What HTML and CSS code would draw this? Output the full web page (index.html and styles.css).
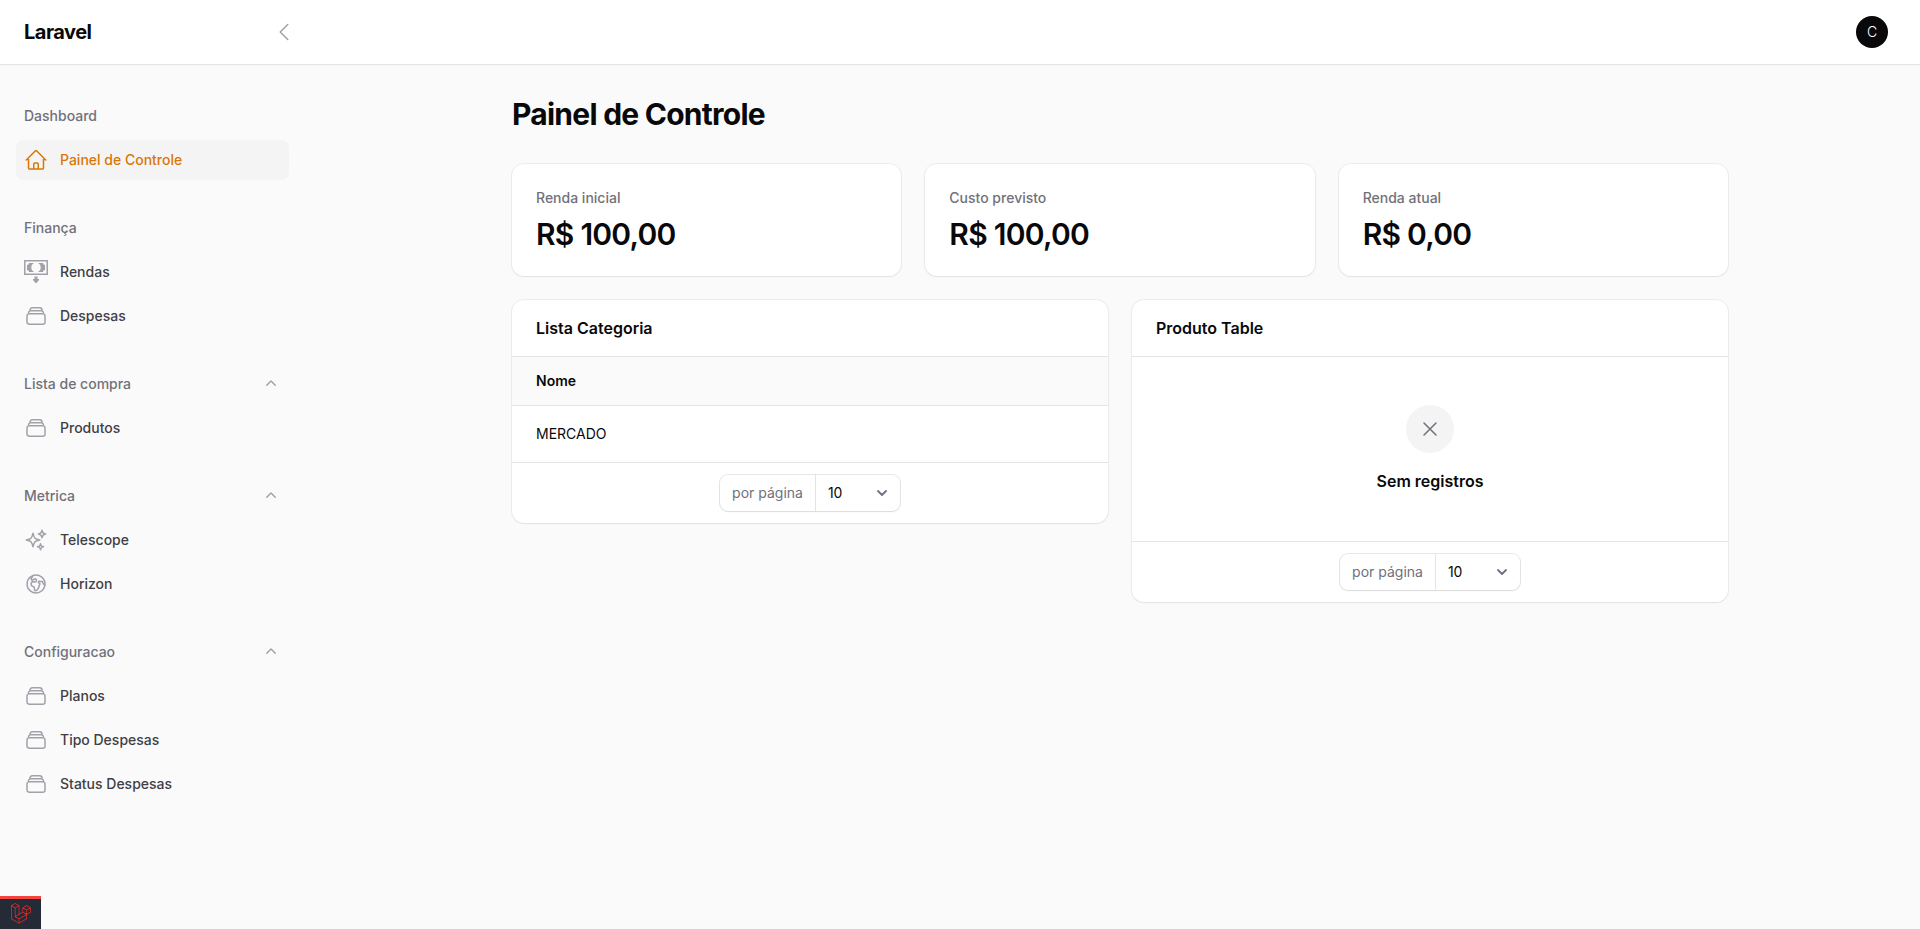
FILE: index.html
```html
<!DOCTYPE html>
<html lang="pt-BR">
<head>
<meta charset="utf-8">
<title>Painel de Controle - Laravel</title>
<link rel="stylesheet" href="styles.css">
</head>
<body>
<svg class="sprite" aria-hidden="true">
  <symbol id="home" viewBox="0 0 24 24"><path d="m2.25 12 8.954-8.955c.44-.439 1.152-.439 1.591 0L21.75 12M4.5 9.75v10.125c0 .621.504 1.125 1.125 1.125H9.75v-4.875c0-.621.504-1.125 1.125-1.125h2.25c.621 0 1.125.504 1.125 1.125V21h4.125c.621 0 1.125-.504 1.125-1.125V9.75M8.25 21h8.25"/></symbol>
  <symbol id="stack" viewBox="0 0 24 24"><path d="M6 6.878V6a2.25 2.25 0 0 1 2.25-2.25h7.5A2.25 2.25 0 0 1 18 6v.878m-12 0c.235-.083.487-.128.75-.128h10.5c.263 0 .515.045.75.128m-12 0A2.25 2.25 0 0 0 4.5 9v.878m13.5-3A2.25 2.25 0 0 1 19.5 9v.878m0 0a2.246 2.246 0 0 0-.75-.128H5.25c-.263 0-.515.045-.75.128m15 0A2.25 2.25 0 0 1 21 12v6a2.25 2.25 0 0 1-2.25 2.25H5.25A2.25 2.25 0 0 1 3 18v-6c0-.98.626-1.813 1.5-2.122"/></symbol>
  <symbol id="cash" viewBox="0 0 24 24"><path fill="currentColor" stroke="none" fill-rule="evenodd" d="M0 0h24v15H0zM1.500 1.500v12h21v-12zM5 3h5a5 5 0 0 0 0 9H5a2 2 0 0 0-2-2V5a2 2 0 0 0 2-2zM14 3h5a2 2 0 0 0 2 2v5a2 2 0 0 0-2 2h-5a5 5 0 0 0 0-9zM10.500 16.500h3V19H15v1l-3 3.500L9 20v-1h1.500z"/></symbol>
  <symbol id="sparkles" viewBox="0 0 24 24"><path d="M9.813 15.904 9 18.75l-.813-2.846a4.5 4.5 0 0 0-3.09-3.09L2.25 12l2.846-.813a4.5 4.5 0 0 0 3.09-3.09L9 5.25l.813 2.846a4.5 4.5 0 0 0 3.09 3.09L15.75 12l-2.846.813a4.5 4.5 0 0 0-3.09 3.09ZM18.259 8.715 18 9.75l-.259-1.035a3.375 3.375 0 0 0-2.455-2.456L14.25 6l1.036-.259a3.375 3.375 0 0 0 2.455-2.456L18 2.25l.259 1.035a3.375 3.375 0 0 0 2.456 2.456L21.75 6l-1.035.259a3.375 3.375 0 0 0-2.456 2.456ZM16.894 20.567 16.5 21.75l-.394-1.183a2.25 2.25 0 0 0-1.423-1.423L13.5 18.75l1.183-.394a2.25 2.25 0 0 0 1.423-1.423l.394-1.183.394 1.183a2.25 2.25 0 0 0 1.423 1.423l1.183.394-1.183.394a2.25 2.25 0 0 0-1.423 1.423Z"/></symbol>
  <symbol id="globe" viewBox="0 0 24 24"><path d="m20.893 13.393-1.135-1.135a2.252 2.252 0 0 1-.421-.585l-1.08-2.16a.414.414 0 0 0-.663-.107.827.827 0 0 1-.812.21l-1.273-.363a.89.89 0 0 0-.738 1.595l.587.39c.59.395.674 1.23.172 1.732l-.2.2c-.212.212-.33.498-.33.796v.41c0 .409-.11.809-.32 1.158l-1.315 2.191a2.11 2.11 0 0 1-1.81 1.025 1.055 1.055 0 0 1-1.055-1.055v-1.172c0-.92-.56-1.747-1.414-2.089l-.655-.261a2.25 2.25 0 0 1-1.383-2.46l.007-.042a2.25 2.25 0 0 1 .29-.787l.09-.15a2.25 2.25 0 0 1 2.37-1.048l1.178.236a1.125 1.125 0 0 0 1.302-.795l.208-.73a1.125 1.125 0 0 0-.578-1.315l-.665-.332-.091.091a2.25 2.25 0 0 1-1.591.659h-.18c-.249 0-.487.1-.662.274a.931.931 0 0 1-1.458-1.137l1.411-2.353a2.25 2.25 0 0 0 .286-.76m11.928 9.869A9 9 0 0 0 8.965 3.525m11.928 9.868A9 9 0 1 1 8.965 3.525"/></symbol>
  <symbol id="left" viewBox="0 0 24 24"><path d="M15.75 19.5 8.25 12l7.5-7.5"/></symbol>
  <symbol id="close" viewBox="0 0 24 24"><path d="M6 18 18 6M6 6l12 12"/></symbol>
  <symbol id="up" viewBox="0 0 20 20"><path fill="currentColor" stroke="none" fill-rule="evenodd" d="M9.470 6.470a.75.75 0 0 1 1.060 0l4.250 4.250a.75.75 0 1 1-1.060 1.060L10 8.060l-3.720 3.720a.75.75 0 0 1-1.060-1.060l4.250-4.250Z"/></symbol>
  <symbol id="down" viewBox="0 0 20 20"><path stroke-width="1.800" d="m6 8 4 4 4-4"/></symbol>
</svg>

<header class="topbar">
  <div class="brand">
    <a class="brand-name" href="#">Laravel</a>
    <button class="icon-button" type="button" aria-label="Recolher menu"><svg class="icon"><use href="#left"/></svg></button>
  </div>
  <button class="avatar" type="button" aria-label="Conta">C</button>
</header>

<div class="layout">
  <nav class="sidebar">
    <section class="group">
      <div class="group-head"><span>Dashboard</span></div>
      <a class="item active" href="#"><svg class="icon"><use href="#home"/></svg>Painel de Controle</a>
    </section>
    <section class="group">
      <div class="group-head"><span>Finança</span></div>
      <a class="item" href="#"><svg class="icon"><use href="#cash"/></svg>Rendas</a>
      <a class="item" href="#"><svg class="icon"><use href="#stack"/></svg>Despesas</a>
    </section>
    <section class="group">
      <button class="group-head" type="button"><span>Lista de compra</span><svg class="icon small"><use href="#up"/></svg></button>
      <a class="item" href="#"><svg class="icon"><use href="#stack"/></svg>Produtos</a>
    </section>
    <section class="group">
      <button class="group-head" type="button"><span>Metrica</span><svg class="icon small"><use href="#up"/></svg></button>
      <a class="item" href="#"><svg class="icon"><use href="#sparkles"/></svg>Telescope</a>
      <a class="item" href="#"><svg class="icon"><use href="#globe"/></svg>Horizon</a>
    </section>
    <section class="group">
      <button class="group-head" type="button"><span>Configuracao</span><svg class="icon small"><use href="#up"/></svg></button>
      <a class="item" href="#"><svg class="icon"><use href="#stack"/></svg>Planos</a>
      <a class="item" href="#"><svg class="icon"><use href="#stack"/></svg>Tipo Despesas</a>
      <a class="item" href="#"><svg class="icon"><use href="#stack"/></svg>Status Despesas</a>
    </section>
  </nav>

  <main class="main">
    <h1 class="title">Painel de Controle</h1>
    <div class="widgets">
      <div class="stats">
        <section class="card stat"><span class="stat-label">Renda inicial</span><span class="stat-value">R$ 100,00</span></section>
        <section class="card stat"><span class="stat-label">Custo previsto</span><span class="stat-value">R$ 100,00</span></section>
        <section class="card stat"><span class="stat-label">Renda atual</span><span class="stat-value">R$ 0,00</span></section>
      </div>
      <div class="tables">
        <section class="card">
          <h2 class="card-title">Lista Categoria</h2>
          <table class="table">
            <thead><tr><th scope="col">Nome</th></tr></thead>
            <tbody><tr><td>MERCADO</td></tr></tbody>
          </table>
          <div class="pager">
            <div class="per-page">
              <label class="per-page-label" for="pp-categoria">por página</label>
              <div class="select-wrap">
                <select class="select" id="pp-categoria"><option>5</option><option selected>10</option><option>25</option><option>50</option><option>Todos</option></select>
                <svg class="icon select-arrow"><use href="#down"/></svg>
              </div>
            </div>
          </div>
        </section>
        <section class="card">
          <h2 class="card-title">Produto Table</h2>
          <div class="empty">
            <div class="empty-icon"><svg class="icon"><use href="#close"/></svg></div>
            <h3 class="empty-title">Sem registros</h3>
          </div>
          <div class="pager">
            <div class="per-page">
              <label class="per-page-label" for="pp-produto">por página</label>
              <div class="select-wrap">
                <select class="select" id="pp-produto"><option>5</option><option selected>10</option><option>25</option><option>50</option><option>Todos</option></select>
                <svg class="icon select-arrow"><use href="#down"/></svg>
              </div>
            </div>
          </div>
        </section>
      </div>
    </div>
  </main>
</div>

<button class="debugbar" type="button" aria-label="Abrir barra de depuração">
  <svg class="debugbar-logo" viewBox="0 0 50 52"><path d="M49.626 11.564a.809.809 0 0 1 .028.209v10.972a.8.8 0 0 1-.402.694l-9.209 5.302V39.25c0 .286-.152.55-.4.694L20.42 51.01c-.044.025-.092.041-.14.058-.018.006-.035.017-.054.022a.805.805 0 0 1-.41 0c-.022-.006-.042-.018-.063-.026-.044-.016-.09-.03-.132-.054L.402 39.944A.801.801 0 0 1 0 39.25V6.334c0-.072.01-.142.028-.21.006-.023.02-.044.028-.067.015-.042.029-.085.051-.124.015-.026.037-.047.055-.071.023-.032.044-.065.071-.093.023-.023.053-.04.079-.06.029-.024.055-.05.088-.069h.001l9.61-5.533a.802.802 0 0 1 .8 0l9.61 5.533h.002c.032.02.059.045.088.068.026.02.055.038.078.06.028.029.048.062.072.094.017.024.04.045.054.071.023.04.036.082.052.124.008.023.022.044.028.068a.809.809 0 0 1 .028.209v20.559l8.008-4.611v-10.51c0-.07.01-.141.028-.208.007-.024.02-.045.028-.068.016-.042.03-.085.052-.124.015-.026.037-.047.054-.071.024-.032.044-.065.072-.093.023-.023.052-.04.078-.06.03-.024.056-.05.088-.069h.001l9.611-5.533a.801.801 0 0 1 .8 0l9.61 5.533c.034.02.06.045.09.068.025.02.054.038.077.06.028.029.048.062.072.094.018.024.04.045.054.071.023.039.036.082.052.124.009.023.022.044.028.068zm-1.574 10.718v-9.124l-3.363 1.936-4.646 2.675v9.124l8.01-4.611zm-9.61 16.505v-9.13l-4.57 2.61-13.05 7.448v9.216l17.62-10.144zM1.602 7.719v31.068L19.22 48.93v-9.214l-9.204-5.209-.003-.002-.004-.002c-.031-.018-.057-.044-.086-.066-.025-.02-.054-.036-.076-.058l-.002-.003c-.026-.025-.044-.056-.066-.084-.02-.027-.044-.05-.06-.078l-.001-.003c-.018-.03-.029-.066-.042-.1-.013-.03-.03-.058-.038-.09v-.001c-.01-.038-.012-.078-.016-.117-.004-.03-.012-.06-.012-.09v-.002-21.481L4.965 9.654 1.602 7.72zm8.81-5.994L2.405 6.334l8.005 4.609 8.006-4.61-8.006-4.608zm4.164 28.764l4.645-2.674V7.719l-3.363 1.936-4.646 2.675v20.096l3.364-1.937zM39.243 7.164l-8.006 4.609 8.006 4.609 8.005-4.61-8.005-4.608zm-.801 10.605l-4.646-2.675-3.363-1.936v9.124l4.645 2.674 3.364 1.937v-9.124zM20.02 38.33l11.743-6.704 5.87-3.35-8-4.606-9.211 5.303-8.395 4.833 7.993 4.524z"/></svg>
</button>
</body>
</html>
```
FILE: styles.css
```css
*, *::before, *::after { box-sizing: border-box; }
body {
  margin: 0;
  min-height: 100vh;
  background: #fafafa;
  color: #09090b;
  font: 400 14px/20px Inter, "Liberation Sans", sans-serif;
}
h1, h2, h3 { margin: 0; }
a { color: inherit; text-decoration: none; }
button, select { font: inherit; color: inherit; background: none; border: 0; margin: 0; padding: 0; }
button { cursor: pointer; }

.sprite { position: absolute; width: 0; height: 0; }
.icon {
  flex: none;
  width: 24px;
  height: 24px;
  fill: none;
  stroke: currentColor;
  stroke-width: 1.5;
  stroke-linecap: round;
  stroke-linejoin: round;
  color: #a1a1aa;
}
.icon.small { width: 20px; height: 20px; }

.topbar {
  display: flex;
  align-items: center;
  justify-content: space-between;
  height: 64px;
  padding: 0 32px 0 24px;
  background: #fff;
  box-shadow: 0 0 0 1px rgb(9 9 11 / 5%), 0 1px 2px rgb(0 0 0 / 5%);
}
.brand { display: flex; align-items: center; justify-content: space-between; width: 272px; }
.brand-name { font-size: 20px; line-height: 20px; font-weight: 700; letter-spacing: -0.025em; }
.icon-button { display: flex; }
.avatar { width: 32px; height: 32px; border-radius: 50%; background: #09090b; color: #fff; font-weight: 300; }

.layout { display: flex; }
.sidebar {
  flex: none;
  display: flex;
  flex-direction: column;
  gap: 28px;
  width: 320px;
  padding: 32px 31px 32px 16px;
  font-weight: 500;
  line-height: 24px;
}
.group { display: flex; flex-direction: column; gap: 4px; }
.group-head {
  display: flex;
  align-items: center;
  justify-content: space-between;
  padding: 8px;
  color: #71717a;
  font-weight: 500;
}
.item {
  display: flex;
  align-items: center;
  gap: 12px;
  padding: 8px;
  border-radius: 8px;
  color: #3f3f46;
}
.item.active { background: #f4f4f5; color: #d97706; }
.item.active .icon { color: #d97706; }

.main { flex: 1; min-width: 0; max-width: 1280px; margin: 0 auto; padding: 32px; }
.title { font-size: 30px; line-height: 36px; font-weight: 700; letter-spacing: -0.025em; }
.widgets { display: grid; gap: 24px; margin-top: 32px; }
.stats { display: grid; grid-template-columns: repeat(3, 1fr); gap: 24px; }
.tables { display: grid; grid-template-columns: repeat(2, 1fr); gap: 24px; align-items: start; }

.card {
  background: #fff;
  border-radius: 12px;
  box-shadow: 0 0 0 1px rgb(9 9 11 / 5%), 0 1px 2px rgb(0 0 0 / 5%);
}
.stat { display: flex; flex-direction: column; gap: 8px; padding: 24px; }
.stat-label { color: #71717a; font-weight: 500; }
.stat-value { font-size: 30px; line-height: 36px; font-weight: 600; letter-spacing: -0.025em; }

.card-title { padding: 16px 24px; font-size: 16px; line-height: 24px; font-weight: 600; }
.table { width: 100%; border-spacing: 0; text-align: left; }
.table th { padding: 14px 24px; background: #fafafa; border-top: 1px solid #e4e4e7; font-weight: 600; }
.table td { padding: 16px 24px; border-top: 1px solid #e4e4e7; line-height: 24px; }

.empty {
  display: flex;
  flex-direction: column;
  align-items: center;
  gap: 16px;
  padding: 48px 24px;
  border-top: 1px solid #e4e4e7;
}
.empty-icon { padding: 12px; border-radius: 50%; background: #f4f4f5; display: flex; }
.empty-icon .icon { color: #71717a; }
.empty-title { font-size: 16px; line-height: 24px; font-weight: 600; }

.pager { display: flex; justify-content: center; padding: 12px; border-top: 1px solid #e4e4e7; }
.per-page {
  display: flex;
  border-radius: 8px;
  box-shadow: 0 0 0 1px rgb(9 9 11 / 10%), 0 1px 2px rgb(0 0 0 / 5%);
}
.per-page-label { padding: 8px 12px; color: #71717a; border-right: 1px solid #e4e4e7; }
.select-wrap { position: relative; }
.select { appearance: none; width: 84px; height: 36px; padding: 0 32px 0 12px; }
.select-arrow { position: absolute; top: 8px; right: 8px; width: 20px; height: 20px; color: #6b7280; pointer-events: none; }

.debugbar {
  position: fixed;
  left: 0;
  bottom: 0;
  display: flex;
  padding: 4px 10px 5px 11px;
  background: #252a37;
  border-top: 3px solid #f4433a;
}
.debugbar-logo { width: 20px; height: 21px; fill: #ff2d20; }
```
